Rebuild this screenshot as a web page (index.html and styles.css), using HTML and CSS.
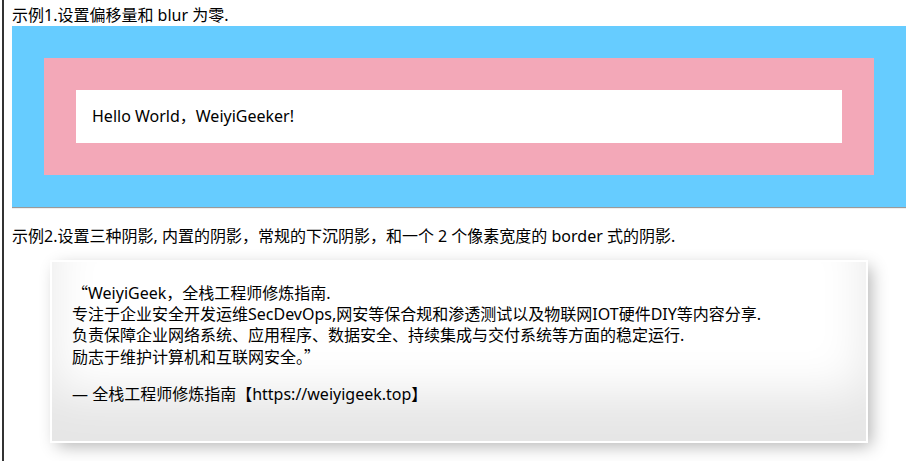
FILE: index.html
```html
<!DOCTYPE html>
<html lang="zh-CN">
<head>
<meta charset="utf-8">
<title>box-shadow 示例</title>
<link rel="stylesheet" href="styles.css">
</head>
<body>
<div class="page">
  <p class="title">示例1.设置偏移量和 blur 为零.</p>
  <div class="ex1">
    <div class="ring">
      <div class="hello">Hello World，WeiyiGeeker!</div>
    </div>
  </div>
  <p class="title t2">示例2.设置三种阴影, 内置的阴影，常规的下沉阴影，和一个 2 个像素宽度的 border 式的阴影.</p>
  <blockquote class="quote">
    <span class="cq">“</span>WeiyiGeek，全栈工程师修炼指南.<br>
    专注于企业安全开发运维SecDevOps,网安等保合规和渗透测试以及物联网IOT硬件DIY等内容分享.<br>
    负责保障企业网络系统、应用程序、数据安全、持续集成与交付系统等方面的稳定运行.<br>
    励志于维护计算机和互联网安全。<span class="cq">”</span>
    <p class="src">— 全栈工程师修炼指南【https://weiyigeek.top】</p>
  </blockquote>
</div>
</body>
</html>
```
FILE: styles.css
```css
html, body {
  margin: 0;
  height: 100%;
}
body {
  font-family: "Noto Sans", "Noto Sans CJK SC", sans-serif;
  font-size: 16px;
  line-height: 21px;
  color: #000;
  background: #fff;
}
.page {
  box-sizing: border-box;
  min-height: 100%;
  margin-left: 2px;
  border-left: 2px solid #333;
  padding: 5px 6px 0 8px;
}
.title {
  margin: 0;
}
.t2 {
  margin-top: 19px;
}
.ex1 {
  background: #66ccff;
  padding: 32px;
  box-shadow: 0 1px 0 #9a9a9a, 0 2px 0 #efefef;
}
.ring {
  background: #f3a8b8;
  padding: 32px;
}
.hello {
  background: #fff;
  padding: 16px;
}
.quote {
  margin: 15px 40px 0;
  padding: 20px;
  box-shadow:
    inset 0 -3em 3em rgba(0, 0, 0, 0.1),
    0 0 0 2px #fff,
    0.3em 0.3em 1em rgba(0, 0, 0, 0.3);
}
.cq {
  font-family: "Noto Sans CJK SC", sans-serif;
}
.src {
  margin: 16px 0;
}
```
